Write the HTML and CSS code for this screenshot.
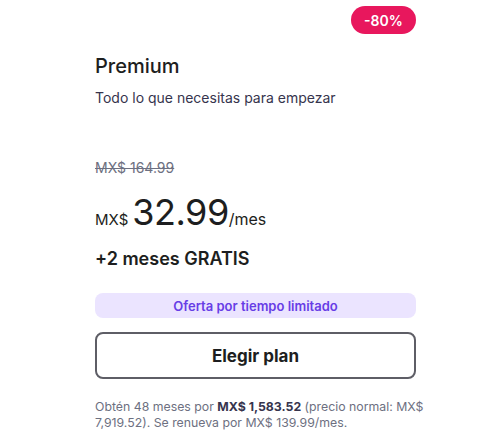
FILE: index.html
```html
<!DOCTYPE html>
<html lang="es">
<head>
<meta charset="utf-8">
<link rel="stylesheet" href="styles.css">
</head>
<body>
<div class="card">
  <div class="badge-row"><span class="badge">-80%</span></div>
  <h2 class="title">Premium</h2>
  <p class="subtitle">Todo lo que necesitas para empezar</p>
  <div class="old-price">MX$ 164.99</div>
  <div class="price"><span class="cur">MX$</span><span class="amount">32.99</span><span class="per">/mes</span></div>
  <div class="bonus">+2 meses GRATIS</div>
  <div class="offer">Oferta por tiempo limitado</div>
  <button class="cta">Elegir plan</button>
  <p class="note">Obtén 48 meses por <b>MX$ 1,583.52</b> (precio normal: MX$ 7,919.52). Se renueva por MX$ 139.99/mes.</p>
</div>
</body>
</html>
```
FILE: styles.css
```css
* { box-sizing: border-box; }
html, body { margin: 0; padding: 0; background: #fff; }
body { font-family: Inter, "Noto Sans", sans-serif; color: #1d1e20; }
.card { width: 321px; margin-left: 95px; padding-top: 6px; display: flex; flex-direction: column; }
.badge-row { display: flex; justify-content: flex-end; }
.badge { color: #fff; font-size: 14px; font-weight: 600; height: 28px; width: 65px; border-radius: 14px; display: flex; align-items: center; justify-content: center; background: #e8175d; }
.title { margin: 20px 0 0; font-size: 20px; font-weight: 500; line-height: 24px; }
.subtitle { margin: 10px 0 0; font-size: 14px; line-height: 20px; color: #36344d; }
.old-price { margin-top: 51px; font-size: 14px; line-height: 18px; color: #6d7081; text-decoration: line-through; }
.price { margin-top: 15px; display: flex; align-items: baseline; line-height: 40px; }
.cur { font-size: 15px; margin-right: 4px; }
.amount { font-size: 36px; letter-spacing: -0.5px; }
.per { font-size: 16px; }
.bonus { margin-top: 7px; font-size: 18px; font-weight: 600; line-height: 24px; }
.offer { margin-top: 22px; height: 25px; border-radius: 8px; background: #ebe4ff; color: #673de6; font-size: 13px; font-weight: 600; display: flex; align-items: center; justify-content: center; }
.cta { margin-top: 14px; height: 47px; width: 100%; border: 2px solid #5e5e66; border-radius: 8px; background: #fff; font-family: inherit; font-size: 17px; font-weight: 700; color: #1d1e20; }
.note { margin: 20px -12px 0 0; font-size: 12.3px; line-height: 16px; color: #6d7081; }
.note b { color: #36344d; font-weight: 700; }
```
